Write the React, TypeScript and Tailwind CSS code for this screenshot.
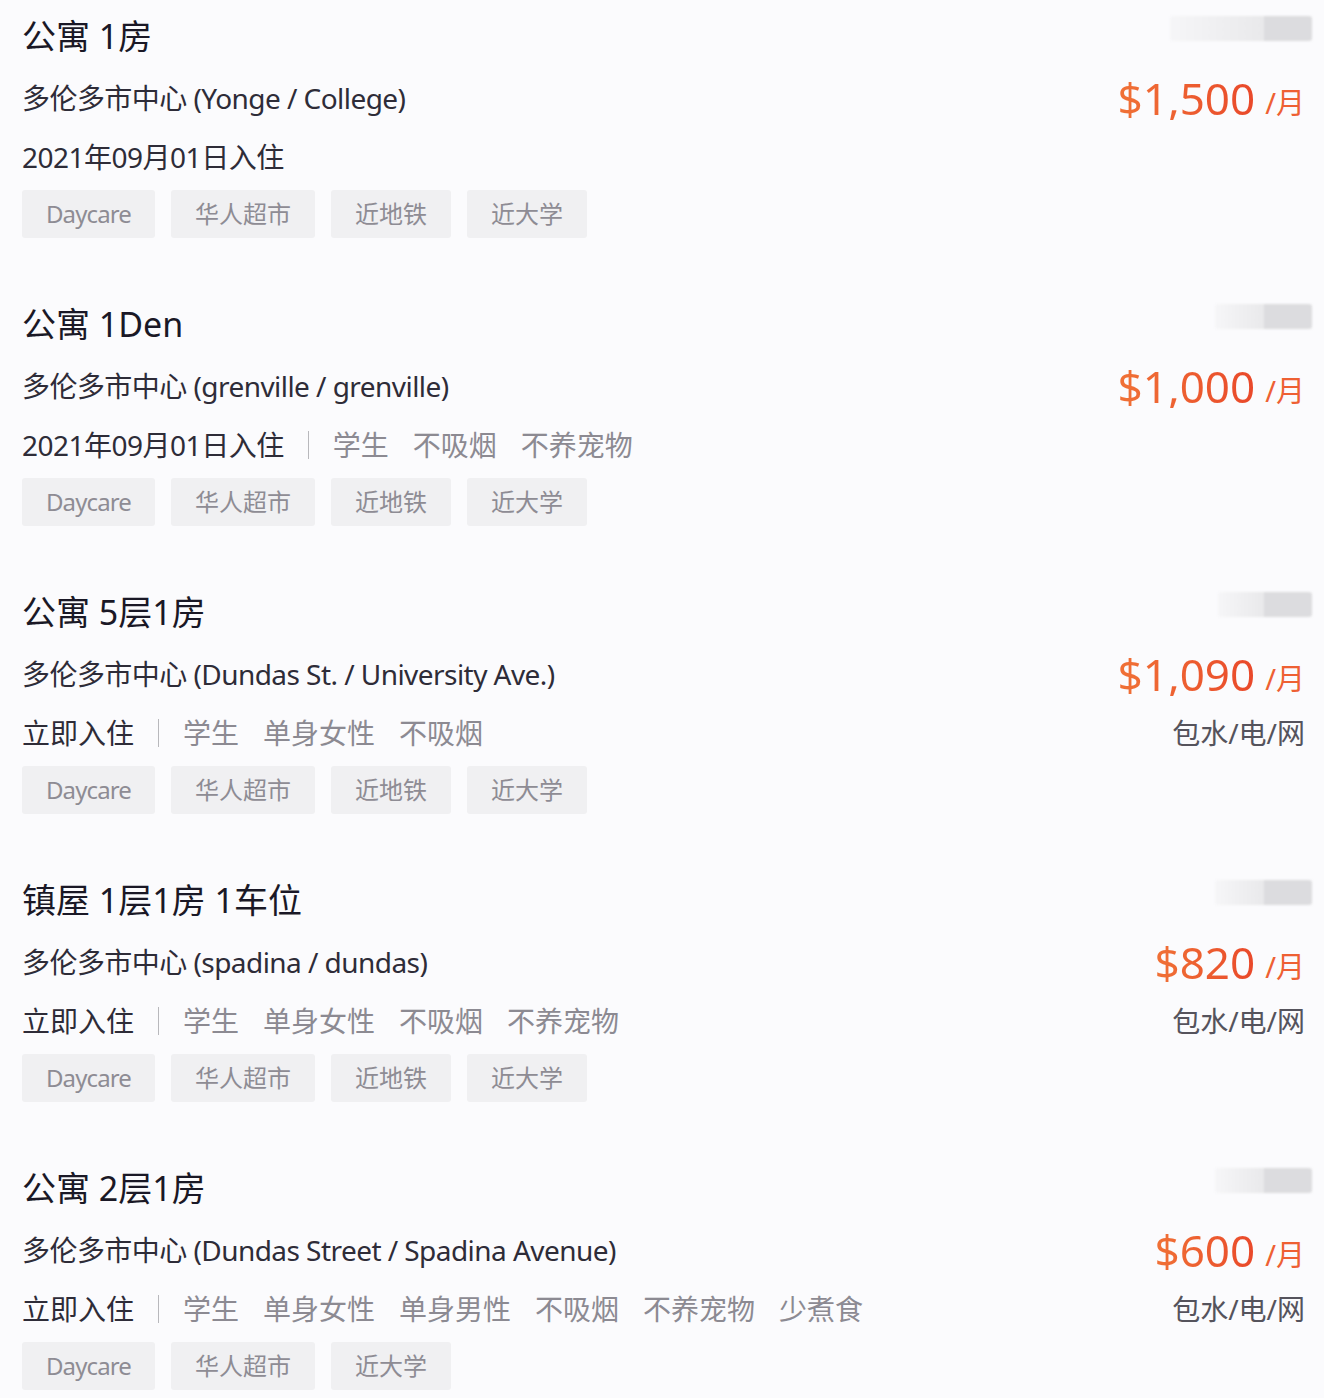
const font = { fontFamily: '"Noto Sans", "Noto Sans CJK SC", sans-serif' };

type Listing = {
  title: string;
  area: string;
  moveIn: string;
  prefs: string[];
  tags: string[];
  price: string;
  bills?: string;
  skeleton: string;
};

const listings: Listing[] = [
  {
    title: '公寓 1房',
    area: '多伦多市中心 (Yonge / College)',
    moveIn: '2021年09月01日入住',
    prefs: [],
    tags: ['Daycare', '华人超市', '近地铁', '近大学'],
    price: '$1,500',
    skeleton: 'w-[142px]',
  },
  {
    title: '公寓 1Den',
    area: '多伦多市中心 (grenville / grenville)',
    moveIn: '2021年09月01日入住',
    prefs: ['学生', '不吸烟', '不养宠物'],
    tags: ['Daycare', '华人超市', '近地铁', '近大学'],
    price: '$1,000',
    skeleton: 'w-[97px]',
  },
  {
    title: '公寓 5层1房',
    area: '多伦多市中心 (Dundas St. / University Ave.)',
    moveIn: '立即入住',
    prefs: ['学生', '单身女性', '不吸烟'],
    tags: ['Daycare', '华人超市', '近地铁', '近大学'],
    price: '$1,090',
    bills: '包水/电/网',
    skeleton: 'w-[94px]',
  },
  {
    title: '镇屋 1层1房 1车位',
    area: '多伦多市中心 (spadina / dundas)',
    moveIn: '立即入住',
    prefs: ['学生', '单身女性', '不吸烟', '不养宠物'],
    tags: ['Daycare', '华人超市', '近地铁', '近大学'],
    price: '$820',
    bills: '包水/电/网',
    skeleton: 'w-[97px]',
  },
  {
    title: '公寓 2层1房',
    area: '多伦多市中心 (Dundas Street / Spadina Avenue)',
    moveIn: '立即入住',
    prefs: ['学生', '单身女性', '单身男性', '不吸烟', '不养宠物', '少煮食'],
    tags: ['Daycare', '华人超市', '近大学'],
    price: '$600',
    bills: '包水/电/网',
    skeleton: 'w-[97px]',
  },
];

function Card({ item }: { item: Listing }) {
  // latin text in the screenshot runs a bit narrower than Noto Sans
  const dated = /^\d/.test(item.moveIn);
  return (
    <div className="flex justify-between pb-[50px]">
      <div className="flex flex-col">
        <div className="h-[72px] flex items-center text-[34px] text-[#1a1826]">{item.title}</div>
        <div className="h-[52px] flex items-center text-[28px] tracking-[-0.55px] text-[#2e2c38]">
          {item.area}
        </div>
        <div className="h-[66px] flex items-center text-[28px]">
          <span className={dated ? 'tracking-[-0.5px] text-[#2e2c38]' : 'text-[#2e2c38]'}>{item.moveIn}</span>
          {item.prefs.length > 0 && (
            <>
              <span className="mx-[24px] h-[28px] w-px bg-[#b8b8bc]"></span>
              <div className="flex gap-[24px] text-[#8c8a92]">
                {item.prefs.map((p) => (
                  <span key={p}>{p}</span>
                ))}
              </div>
            </>
          )}
        </div>
        <div className="flex gap-[16px]">
          {item.tags.map((t) => (
            <span
              key={t}
              className={
                /^[A-Za-z]/.test(t)
                  ? 'h-12 px-6 flex items-center rounded-[3px] bg-[#f0f0f2] text-[24px] tracking-[-0.9px] text-[#8e8c94]'
                  : 'h-12 px-6 flex items-center rounded-[3px] bg-[#f0f0f2] text-[24px] text-[#8e8c94]'
              }
            >
              {t}
            </span>
          ))}
        </div>
      </div>
      <div className="flex flex-col items-end">
        <div className="h-[72px] pt-[16px]">
          <div className={`flex h-[25px] ${item.skeleton} rounded-[3px] overflow-hidden blur-[1px]`}>
            <div className="flex-1 bg-gradient-to-r from-[#f6f6f8] to-[#e9e9eb]"></div>
            <div className="w-[48px] bg-[#dcdcdf]"></div>
          </div>
        </div>
        <div className="h-[52px] flex items-center pr-[7px]">
          <span className="text-[44px] leading-none bg-gradient-to-r from-[#f07136] to-[#e9482a] bg-clip-text text-transparent">
            {item.price}
          </span>
          <span className="ml-[10px] mt-[8px] text-[29px] leading-none text-[#ee6033]">/月</span>
        </div>
        {item.bills && (
          <div className="h-[66px] flex items-center pr-[7px] text-[28px] text-[#55535c]">{item.bills}</div>
        )}
      </div>
    </div>
  );
}

export default function App() {
  return (
    <div className="min-h-[1398px] bg-[#fbfbfd] pl-[22px] pr-[12px]" style={font}>
      {listings.map((l) => (
        <Card key={l.title} item={l} />
      ))}
    </div>
  );
}
